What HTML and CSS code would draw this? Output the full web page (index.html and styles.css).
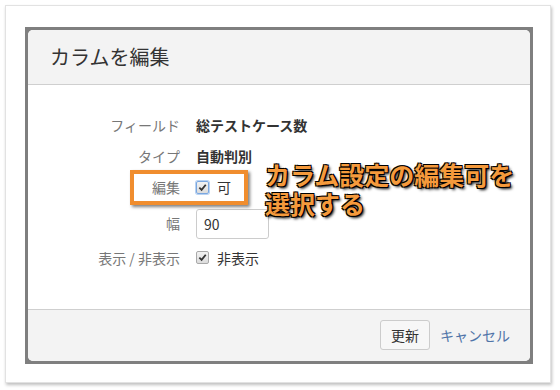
FILE: index.html
```html
<!DOCTYPE html>
<html lang="ja">

<head>
    <meta charset="UTF-8">
    <meta name="viewport" content="width=device-width, initial-scale=1.0">
    <title>カラムを編集</title>
    <link rel="stylesheet" href="styles.css">
</head>

<body>

    <div class="shot">
        <div class="backdrop">
            <div class="dialog">
                <div class="dialog-header">カラムを編集</div>

                <div class="dialog-body">
                    <div class="form-grid">
                        <div class="label">フィールド</div>
                        <div class="value strong">総テストケース数</div>

                        <div class="label">タイプ</div>
                        <div class="value strong">自動判別</div>

                        <div class="label">編集</div>
                        <div class="value">
                            <span class="check focused">
                                <svg viewBox="0 0 10 10" width="9" height="9"><path d="M1.5 5.2 L4 7.6 L8.6 2" fill="none" stroke="#333" stroke-width="2"/></svg>
                            </span>
                            <span>可</span>
                        </div>

                        <div class="label">幅</div>
                        <div class="value">
                            <input class="text-input" type="text" value="90">
                        </div>

                        <div class="label">表示 / 非表示</div>
                        <div class="value">
                            <span class="check">
                                <svg viewBox="0 0 10 10" width="9" height="9"><path d="M1.5 5.2 L4 7.6 L8.6 2" fill="none" stroke="#333" stroke-width="2"/></svg>
                            </span>
                            <span>非表示</span>
                        </div>
                    </div>
                </div>

                <div class="dialog-footer">
                    <button class="btn">更新</button>
                    <a class="cancel" href="#">キャンセル</a>
                </div>
            </div>
        </div>

        <!-- 注釈 -->
        <div class="mark-box"></div>
        <div class="note">
            <div>カラム設定の編集可を</div>
            <div>選択する</div>
        </div>
    </div>

</body>

</html>
```

FILE: styles.css
```css
body {
    margin: 0;
    background-color: #fff;
    font-family: "Noto Sans CJK JP", "Noto Sans", sans-serif;
    color: #333;
}

.shot {
    position: relative;
    margin: 5px;
    width: 546px;
    height: 378px;
    border: 1px solid #e2e2e2;
    box-shadow: 1px 2px 3px rgba(0, 0, 0, 0.25);
    box-sizing: border-box;
    padding: 21px 0 0 19px;
    background-color: #fff;
}

.backdrop {
    width: 508px;
    height: 337px;
    padding: 3px;
    box-sizing: border-box;
    background-color: #7f7f7f;
}

.dialog {
    height: 100%;
    background-color: #fff;
    border-radius: 5px;
    overflow: hidden;
    display: flex;
    flex-direction: column;
}

.dialog-header {
    height: 55px;
    box-sizing: border-box;
    padding: 0 0 2px 22px;
    display: flex;
    align-items: center;
    background-color: #f3f3f3;
    border-bottom: 1px solid #cfcfcf;
    font-size: 20px;
    color: #333;
}

.dialog-body {
    flex: 1;
    padding-top: 30px;
}

.form-grid {
    display: grid;
    grid-template-columns: 152px 1fr;
    grid-template-rows: 20px 20px 20px 30px 20px;
    column-gap: 16px;
    row-gap: 11px;
    font-size: 14px;
}

.form-grid .label:nth-last-child(2),
.form-grid .value:last-child {
    margin-top: -3px;
}

.label {
    text-align: right;
    color: #777;
    line-height: 20px;
    align-self: center;
}

.value {
    display: flex;
    align-items: center;
    gap: 8px;
    line-height: 20px;
}

.strong {
    font-weight: bold;
    color: #333;
}

.check {
    width: 11px;
    height: 11px;
    border: 1px solid #a9a9a9;
    border-radius: 2px;
    background: linear-gradient(#f2f2f2, #dcdcdc);
    display: flex;
    align-items: center;
    justify-content: center;
}

.check.focused {
    border-color: #7aa7e0;
    box-shadow: 0 0 0 1px #b8d2f2;
}

.text-input {
    width: 73px;
    height: 30px;
    margin-top: 2px;
    box-sizing: border-box;
    border: 1px solid #ccc;
    border-radius: 3px;
    padding: 0 7px;
    font-family: inherit;
    font-size: 14px;
    color: #333;
}

.dialog-footer {
    height: 52px;
    box-sizing: border-box;
    background-color: #f3f3f3;
    border-top: 1px solid #cfcfcf;
    display: flex;
    align-items: center;
    justify-content: flex-end;
    padding: 0 20px 2px 0;
    gap: 10px;
}

.btn {
    width: 50px;
    height: 30px;
    border: 1px solid #ccc;
    border-radius: 3px;
    background-color: #f7f7f7;
    font-family: inherit;
    font-size: 14px;
    color: #333;
    padding: 0;
}

.cancel {
    font-size: 14px;
    color: #4f74a8;
    text-decoration: none;
}

.mark-box {
    position: absolute;
    left: 124px;
    top: 164px;
    width: 118px;
    height: 35px;
    box-sizing: border-box;
    border: 4px solid #f08d2e;
    box-shadow: 2px 2px 3px rgba(0, 0, 0, 0.5);
}

.note {
    position: absolute;
    left: 259px;
    top: 154px;
    font-size: 25px;
    font-weight: bold;
    line-height: 29px;
    color: #f59a3c;
    text-shadow: 1px 1px 0 #000, -1px -1px 0 #000, 1px -1px 0 #000, -1px 1px 0 #000, 2px 2px 3px #000;
}
```
